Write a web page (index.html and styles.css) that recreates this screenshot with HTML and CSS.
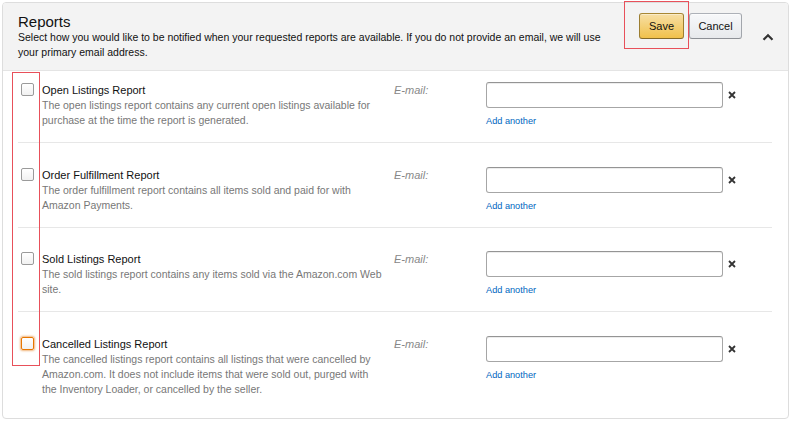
FILE: index.html
```html
<!DOCTYPE html>
<html lang="en">
<head>
<meta charset="utf-8">
<title>Reports</title>
<link rel="stylesheet" href="styles.css">
</head>
<body>
<div class="panel">
  <div class="panel-head">
    <div class="head-text">
      <h2 class="title">Reports</h2>
      <p class="intro">Select how you would like to be notified when your requested reports are available. If you do not provide an email, we will use your primary email address.</p>
    </div>
    <div class="actions">
      <button class="btn btn-primary">Save</button>
      <button class="btn btn-secondary">Cancel</button>
      <svg class="chevron" width="12" height="8" viewBox="0 0 12 8"><polyline points="1.5,6.8 6,2.2 10.5,6.8" fill="none" stroke="#333" stroke-width="2.2"/></svg>
    </div>
  </div>
  <div class="panel-body">
    <div class="row">
      <span class="check"></span>
      <div class="info">
        <div class="name">Open Listings Report</div>
        <div class="desc">The open listings report contains any current open listings available for purchase at the time the report is generated.</div>
      </div>
      <div class="label">E-mail:</div>
      <div class="field">
        <div class="input"></div>
        <a class="add" href="#">Add another</a>
      </div>
      <svg class="remove" width="8" height="8" viewBox="0 0 8 8"><path d="M1 1L7 7M7 1L1 7" stroke="#333" stroke-width="1.8"/></svg>
    </div>
    <div class="row">
      <span class="check"></span>
      <div class="info">
        <div class="name">Order Fulfillment Report</div>
        <div class="desc">The order fulfillment report contains all items sold and paid for with Amazon Payments.</div>
      </div>
      <div class="label">E-mail:</div>
      <div class="field">
        <div class="input"></div>
        <a class="add" href="#">Add another</a>
      </div>
      <svg class="remove" width="8" height="8" viewBox="0 0 8 8"><path d="M1 1L7 7M7 1L1 7" stroke="#333" stroke-width="1.8"/></svg>
    </div>
    <div class="row">
      <span class="check"></span>
      <div class="info">
        <div class="name">Sold Listings Report</div>
        <div class="desc">The sold listings report contains any items sold via the Amazon.com Web site.</div>
      </div>
      <div class="label">E-mail:</div>
      <div class="field">
        <div class="input"></div>
        <a class="add" href="#">Add another</a>
      </div>
      <svg class="remove" width="8" height="8" viewBox="0 0 8 8"><path d="M1 1L7 7M7 1L1 7" stroke="#333" stroke-width="1.8"/></svg>
    </div>
    <div class="row">
      <span class="check check-focus"></span>
      <div class="info">
        <div class="name">Cancelled Listings Report</div>
        <div class="desc">The cancelled listings report contains all listings that were cancelled by Amazon.com. It does not include items that were sold out, purged with the Inventory Loader, or cancelled by the seller.</div>
      </div>
      <div class="label">E-mail:</div>
      <div class="field">
        <div class="input"></div>
        <a class="add" href="#">Add another</a>
      </div>
      <svg class="remove" width="8" height="8" viewBox="0 0 8 8"><path d="M1 1L7 7M7 1L1 7" stroke="#333" stroke-width="1.8"/></svg>
    </div>
  </div>
</div>
<div class="mark mark-checks"></div>
<div class="mark mark-save"></div>
</body>
</html>
```
FILE: styles.css
```css
* { box-sizing: border-box; }
html, body { margin: 0; padding: 0; background: #fff; }
body {
  font-family: "Liberation Sans", Arial, sans-serif;
  color: #111;
  position: relative;
  width: 792px;
  height: 424px;
  overflow: hidden;
}
.panel {
  margin: 2px 0 0 2px;
  width: 787px;
  height: 417px;
  border: 1px solid #ddd;
  border-radius: 4px;
  overflow: hidden;
}
.panel-head {
  display: flex;
  align-items: flex-start;
  background: #f3f3f3;
  border-bottom: 1px solid #e4e4e4;
  padding: 10px 14px 10px 15px;
  height: 68px;
}
.head-text { width: 592px; }
.title {
  margin: 0;
  font-size: 15px;
  line-height: 17px;
  font-weight: normal;
  color: #111;
}
.intro {
  margin: 0;
  font-size: 10.5px;
  line-height: 15px;
  color: #111;
}
.actions {
  margin-left: auto;
  display: flex;
  align-items: flex-start;
}
.btn {
  font-family: "Liberation Sans", Arial, sans-serif;
  font-size: 11px;
  height: 26px;
  line-height: 24px;
  padding: 0;
  border-radius: 3px;
  border: 1px solid;
  color: #111;
  cursor: pointer;
}
.btn-primary {
  width: 45px;
  background: linear-gradient(to bottom, #f7dfa5, #f0c14b);
  border-color: #a88734 #9c7e31 #846a29;
  box-shadow: inset 0 1px 0 rgba(255,255,255,.4);
}
.btn-secondary {
  width: 53px;
  margin-left: 5px;
  background: linear-gradient(to bottom, #f7f8fa, #e7e9ec);
  border-color: #adb1b8 #a2a6ac #8d9096;
  box-shadow: inset 0 1px 0 rgba(255,255,255,.6);
}
.chevron {
  margin: 20px 0 0 20px;
  display: block;
}
.panel-body {
  padding: 0 16px 8px 15px;
}
.row {
  display: flex;
  align-items: flex-start;
  padding: 23.5px 0 14px;
  border-bottom: 1px solid #e7e7e7;
}
.row:first-child { padding-top: 11px; }
.row:last-child { border-bottom: 0; }
.check {
  flex: none;
  width: 13px;
  height: 13px;
  margin: 1px 8px 0 3px;
  border: 1px solid #9a9a9a;
  border-radius: 2px;
  background: linear-gradient(to bottom, #fff, #f1f1f1);
}
.check-focus {
  border-color: #e77600;
  box-shadow: 0 0 2px 1px rgba(228,121,17,.55);
}
.info { width: 342px; flex: none; }
.name {
  font-size: 11px;
  line-height: 16px;
  color: #111;
}
.desc {
  font-size: 10.5px;
  line-height: 15px;
  color: #777;
}
.label {
  flex: none;
  width: 92px;
  margin-left: 10px;
  font-size: 11px;
  line-height: 16px;
  font-style: italic;
  color: #888;
}
.field { width: 237px; flex: none; }
.input {
  height: 26px;
  border: 1px solid #a6a6a6;
  border-top-color: #949494;
  border-radius: 3px;
  background: #fff;
  box-shadow: inset 0 1px 0 rgba(0,0,0,.07);
}
.add {
  display: block;
  margin-top: 7px;
  font-size: 9.2px;
  line-height: 12px;
  color: #0066c0;
  text-decoration: none;
}
.remove {
  flex: none;
  margin: 9px 0 0 5px;
  display: block;
}
.mark {
  position: absolute;
  border: 1.5px solid #e8505a;
  pointer-events: none;
}
.mark-checks {
  left: 12px;
  top: 72px;
  width: 28px;
  height: 294px;
}
.mark-save {
  left: 624px;
  top: 1px;
  width: 65px;
  height: 48px;
}
```
